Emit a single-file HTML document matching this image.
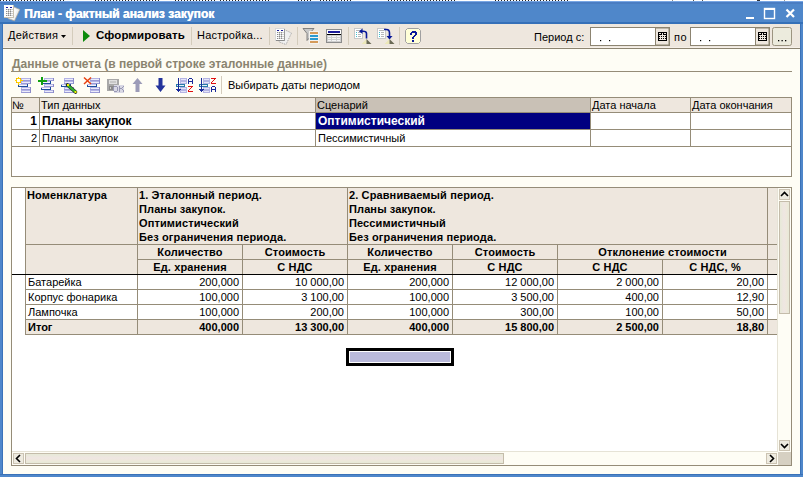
<!DOCTYPE html>
<html><head><meta charset="utf-8">
<style>
*{box-sizing:border-box;margin:0;padding:0}
html,body{width:803px;height:477px;overflow:hidden;background:#fefdf5;font-family:"Liberation Sans",sans-serif;font-size:11px;color:#000}
.a{position:absolute}
.t{position:absolute;white-space:nowrap;line-height:13px}
.b{font-weight:bold}
.rb{font-weight:bold;letter-spacing:0.12px}
#title{left:0;top:1px;width:803px;height:23px;background:linear-gradient(#78a6e4 0 1px,#4a7dc2 1px 3px,#4f87ca 3px 21px,#3570b8 21px)}
#topstrip{left:0;top:0;width:803px;height:1px;background:#fff}
#lb{left:0;top:24px;width:3px;height:453px;background:linear-gradient(90deg,#4f87ca 0 2px,#3a72b8 2px)}
#rb{left:800px;top:24px;width:3px;height:453px;background:linear-gradient(90deg,#3a72b8 0 1px,#4f87ca 1px)}
#bb{left:0;top:474px;width:803px;height:3px;background:linear-gradient(#3a72b8 0 1px,#4f87ca 1px)}
#tb{left:3px;top:24px;width:797px;height:25px;background:linear-gradient(#eee7de 0 23px,#f6f0e8 23px 24px,#8c8471 24px)}
.sep{position:absolute;width:1px;height:18px;background:#d4ccbc}
.grid{position:absolute;background:#fff;border:1px solid #958c78}
.hl{position:absolute;height:1px;background:#958c78}
.vl{position:absolute;width:1px;background:#958c78}
.hdr{position:absolute;background:#eee7de}
</style></head><body>
<div class="a" id="topstrip"></div>
<div class="a" style="left:672px;top:0;width:1px;height:1px;background:#888"></div><div class="a" style="left:693px;top:0;width:1px;height:1px;background:#555"></div><div class="a" style="left:702px;top:0;width:1px;height:1px;background:#555"></div><div class="a" style="left:757px;top:0;width:3px;height:1px;background:#333"></div><div class="a" style="left:784px;top:0;width:1px;height:1px;background:#999"></div>
<div class="a" style="left:0px;top:0;width:65px;height:1px;background:repeating-linear-gradient(90deg,#222 0 1px,transparent 1px 3px)"></div><div class="a" style="left:95px;top:0;width:65px;height:1px;background:repeating-linear-gradient(90deg,#222 0 1px,transparent 1px 3px)"></div><div class="a" style="left:175px;top:0;width:40px;height:1px;background:repeating-linear-gradient(90deg,#222 0 1px,transparent 1px 3px)"></div><div class="a" style="left:220px;top:0;width:49px;height:1px;background:repeating-linear-gradient(90deg,#222 0 1px,transparent 1px 3px)"></div><div class="a" style="left:298px;top:0;width:14px;height:1px;background:repeating-linear-gradient(90deg,#222 0 1px,transparent 1px 3px)"></div><div class="a" style="left:320px;top:0;width:32px;height:1px;background:repeating-linear-gradient(90deg,#222 0 1px,transparent 1px 3px)"></div><div class="a" style="left:388px;top:0;width:68px;height:1px;background:repeating-linear-gradient(90deg,#222 0 1px,transparent 1px 3px)"></div><div class="a" style="left:495px;top:0;width:73px;height:1px;background:repeating-linear-gradient(90deg,#222 0 1px,transparent 1px 3px)"></div>
<div class="a" id="title"></div>
<div class="a" id="lb"></div><div class="a" id="rb"></div><div class="a" id="bb"></div>
<div class="a" id="tb"></div>

<!-- title text -->
<div class="t b" style="left:24px;top:6px;font-size:12px;line-height:16px;color:#fff;letter-spacing:0.05px;text-shadow:0.4px 0 0 #fff">План - фактный анализ закупок</div>

<!-- toolbar -->
<div class="t" style="left:8px;top:29px;letter-spacing:0.25px">Действия</div>
<div class="sep" style="left:72px;top:27px"></div>
<div class="t b" style="left:96px;top:29px;font-size:11.5px;letter-spacing:0.1px">Сформировать</div>
<div class="sep" style="left:191px;top:27px"></div>
<div class="t" style="left:197px;top:29px;letter-spacing:0.2px">Настройка...</div>
<div class="sep" style="left:269px;top:27px"></div>
<div class="sep" style="left:297px;top:27px"></div>
<div class="sep" style="left:348px;top:27px"></div>
<div class="sep" style="left:399px;top:27px"></div>
<div class="t" style="left:534px;top:31px">Период с:</div>
<div class="t" style="left:674px;top:31px;letter-spacing:0.5px">по</div>

<!-- section caption -->
<div class="t b" style="left:12px;top:58px;font-size:12px;color:#8a8470">Данные отчета (в первой строке эталонные данные)</div>
<div class="a" style="left:11px;top:71px;width:781px;height:1px;background:#958c78"></div>
<div class="sep" style="left:221px;top:76px"></div>
<div class="t" style="left:228px;top:79px">Выбирать даты периодом</div>

<!-- grid 1 -->
<div class="grid" style="left:11px;top:97px;width:781px;height:80px"></div>
<div class="hdr" style="left:12px;top:98px;width:779px;height:14px"></div>
<div class="a" style="left:316px;top:98px;width:274px;height:14px;background:#c9c1b6"></div>
<div class="a" style="left:316px;top:113px;width:274px;height:16px;background:#000080"></div>
<div class="hl" style="left:12px;top:112px;width:779px"></div>
<div class="hl" style="left:12px;top:129px;width:779px"></div>
<div class="hl" style="left:12px;top:146px;width:779px"></div>
<div class="vl" style="left:39px;top:98px;height:48px"></div>
<div class="vl" style="left:315px;top:98px;height:48px"></div>
<div class="vl" style="left:590px;top:98px;height:48px"></div>
<div class="vl" style="left:690px;top:98px;height:48px"></div>
<div class="t" style="left:12px;top:99px">№</div>
<div class="t" style="left:41px;top:99px">Тип данных</div>
<div class="t" style="left:317px;top:99px">Сценарий</div>
<div class="t" style="left:592px;top:99px">Дата начала</div>
<div class="t" style="left:692px;top:99px">Дата окончания</div>
<div class="t b" style="left:12px;top:115px;width:25px;text-align:right;font-size:12px">1</div>
<div class="t b" style="left:42px;top:115px;font-size:12px">Планы закупок</div>
<div class="t b" style="left:318px;top:115px;font-size:12px;color:#fff">Оптимистический</div>
<div class="t" style="left:12px;top:132px;width:25px;text-align:right">2</div>
<div class="t" style="left:42px;top:132px">Планы закупок</div>
<div class="t" style="left:318px;top:132px">Пессимистичный</div>

<!-- report frame -->
<div class="grid" style="left:11px;top:187px;width:781px;height:279px"></div>

<!-- REPORT -->
<div class="a" style="left:26px;top:188px;width:751px;height:86px;background:#eee7de"></div>
<div class="a" style="left:26px;top:320px;width:751px;height:14px;background:#eee7de"></div>
<div class="a" style="left:25px;top:244px;width:752px;height:1px;background:#958c78"></div>
<div class="a" style="left:137px;top:259px;width:640px;height:1px;background:#958c78"></div>
<div class="a" style="left:25px;top:188px;width:1px;height:146px;background:#958c78"></div>
<div class="a" style="left:137px;top:188px;width:1px;height:86px;background:#958c78"></div>
<div class="a" style="left:347px;top:188px;width:1px;height:86px;background:#958c78"></div>
<div class="a" style="left:767px;top:188px;width:1px;height:86px;background:#958c78"></div>
<div class="a" style="left:557px;top:244px;width:1px;height:30px;background:#958c78"></div>
<div class="a" style="left:242px;top:244px;width:1px;height:90px;background:#958c78"></div>
<div class="a" style="left:452px;top:244px;width:1px;height:90px;background:#958c78"></div>
<div class="a" style="left:662px;top:259px;width:1px;height:75px;background:#958c78"></div>
<div class="a" style="left:137px;top:274px;width:1px;height:60px;background:#958c78"></div>
<div class="a" style="left:347px;top:274px;width:1px;height:60px;background:#958c78"></div>
<div class="a" style="left:557px;top:274px;width:1px;height:60px;background:#958c78"></div>
<div class="a" style="left:767px;top:274px;width:1px;height:60px;background:#958c78"></div>
<div class="a" style="left:12px;top:274px;width:765px;height:1px;background:#000"></div>
<div class="a" style="left:25px;top:289px;width:752px;height:1px;background:#958c78"></div>
<div class="t" style="left:28px;top:276px;">Батарейка</div>
<div class="t" style="left:138px;top:276px;width:101px;text-align:right;">200,000</div>
<div class="t" style="left:243px;top:276px;width:101px;text-align:right;">10 000,00</div>
<div class="t" style="left:348px;top:276px;width:101px;text-align:right;">200,000</div>
<div class="t" style="left:453px;top:276px;width:101px;text-align:right;">12 000,00</div>
<div class="t" style="left:558px;top:276px;width:101px;text-align:right;">2 000,00</div>
<div class="t" style="left:663px;top:276px;width:101px;text-align:right;">20,00</div>
<div class="a" style="left:25px;top:304px;width:752px;height:1px;background:#958c78"></div>
<div class="t" style="left:28px;top:291px;">Корпус фонарика</div>
<div class="t" style="left:138px;top:291px;width:101px;text-align:right;">100,000</div>
<div class="t" style="left:243px;top:291px;width:101px;text-align:right;">3 100,00</div>
<div class="t" style="left:348px;top:291px;width:101px;text-align:right;">100,000</div>
<div class="t" style="left:453px;top:291px;width:101px;text-align:right;">3 500,00</div>
<div class="t" style="left:558px;top:291px;width:101px;text-align:right;">400,00</div>
<div class="t" style="left:663px;top:291px;width:101px;text-align:right;">12,90</div>
<div class="a" style="left:25px;top:319px;width:752px;height:1px;background:#958c78"></div>
<div class="t" style="left:28px;top:306px;">Лампочка</div>
<div class="t" style="left:138px;top:306px;width:101px;text-align:right;">100,000</div>
<div class="t" style="left:243px;top:306px;width:101px;text-align:right;">200,00</div>
<div class="t" style="left:348px;top:306px;width:101px;text-align:right;">100,000</div>
<div class="t" style="left:453px;top:306px;width:101px;text-align:right;">300,00</div>
<div class="t" style="left:558px;top:306px;width:101px;text-align:right;">100,00</div>
<div class="t" style="left:663px;top:306px;width:101px;text-align:right;">50,00</div>
<div class="a" style="left:25px;top:334px;width:752px;height:1px;background:#958c78"></div>
<div class="t b" style="left:28px;top:321px;">Итог</div>
<div class="t b" style="left:138px;top:321px;width:101px;text-align:right;">400,000</div>
<div class="t b" style="left:243px;top:321px;width:101px;text-align:right;">13 300,00</div>
<div class="t b" style="left:348px;top:321px;width:101px;text-align:right;">400,000</div>
<div class="t b" style="left:453px;top:321px;width:101px;text-align:right;">15 800,00</div>
<div class="t b" style="left:558px;top:321px;width:101px;text-align:right;">2 500,00</div>
<div class="t b" style="left:663px;top:321px;width:101px;text-align:right;">18,80</div>
<div class="t rb" style="left:27px;top:189px;">Номенклатура</div>
<div class="t rb" style="left:139px;top:189px;">1. Эталонный период.</div>
<div class="t rb" style="left:139px;top:203px;">Планы закупок.</div>
<div class="t rb" style="left:139px;top:217px;">Оптимистический</div>
<div class="t rb" style="left:139px;top:231px;">Без ограничения периода.</div>
<div class="t rb" style="left:349px;top:189px;">2. Сравниваемый период.</div>
<div class="t rb" style="left:349px;top:203px;">Планы закупок.</div>
<div class="t rb" style="left:349px;top:217px;">Пессимистичный</div>
<div class="t rb" style="left:349px;top:231px;">Без ограничения периода.</div>
<div class="t rb" style="left:138px;top:246px;width:104px;text-align:center;">Количество</div>
<div class="t rb" style="left:138px;top:261px;width:104px;text-align:center;">Ед. хранения</div>
<div class="t rb" style="left:243px;top:246px;width:104px;text-align:center;">Стоимость</div>
<div class="t rb" style="left:243px;top:261px;width:104px;text-align:center;">С НДС</div>
<div class="t rb" style="left:348px;top:246px;width:104px;text-align:center;">Количество</div>
<div class="t rb" style="left:348px;top:261px;width:104px;text-align:center;">Ед. хранения</div>
<div class="t rb" style="left:453px;top:246px;width:104px;text-align:center;">Стоимость</div>
<div class="t rb" style="left:453px;top:261px;width:104px;text-align:center;">С НДС</div>
<div class="t rb" style="left:558px;top:246px;width:209px;text-align:center;">Отклонение стоимости</div>
<div class="t rb" style="left:558px;top:261px;width:104px;text-align:center;">С НДС</div>
<div class="t rb" style="left:663px;top:261px;width:104px;text-align:center;">С НДС, %</div>
<!-- /REPORT -->
<!-- ICONS -->
<svg class="a" style="left:0;top:0" width="803" height="477" viewBox="0 0 803 477">
<!-- title icon -->
<g>
<path d="M13 6.5 L19.8 9.5 L14.5 20.8 L8 18.5 Z" fill="#f0f0f0" stroke="#b0aaa0" stroke-width="0.8"/>
<path d="M14 8 L17 10 L13 19 L10 17.5 Z" fill="#fafafa"/>
<rect x="4" y="5" width="10" height="13" fill="#fdfdfd"/>
<rect x="4" y="17" width="10" height="1" fill="#c8c0b0"/><rect x="13" y="5" width="1" height="13" fill="#c8c0b0"/>
<rect x="6" y="7" width="2" height="1" fill="#1a1a9a"/><rect x="10" y="7" width="2" height="1" fill="#1a1a9a"/>
<g shape-rendering="crispEdges"><rect x="6" y="9" width="7" height="1" fill="#d0d0d0"/><rect x="6" y="9" width="1" height="1" fill="#8c8c8c"/><rect x="8" y="9" width="1" height="1" fill="#8c8c8c"/><rect x="10" y="9" width="1" height="1" fill="#8c8c8c"/><rect x="6" y="11" width="7" height="1" fill="#d0d0d0"/><rect x="6" y="11" width="1" height="1" fill="#8c8c8c"/><rect x="8" y="11" width="1" height="1" fill="#8c8c8c"/><rect x="10" y="11" width="1" height="1" fill="#8c8c8c"/><rect x="6" y="13" width="7" height="1" fill="#d0d0d0"/><rect x="6" y="13" width="1" height="1" fill="#8c8c8c"/><rect x="8" y="13" width="1" height="1" fill="#8c8c8c"/><rect x="10" y="13" width="1" height="1" fill="#8c8c8c"/><rect x="6" y="15" width="7" height="1" fill="#d0d0d0"/><rect x="6" y="15" width="1" height="1" fill="#8c8c8c"/><rect x="8" y="15" width="1" height="1" fill="#8c8c8c"/><rect x="10" y="15" width="1" height="1" fill="#8c8c8c"/><rect x="8" y="10" width="1" height="1" fill="#c0c0c0"/><rect x="8" y="12" width="1" height="1" fill="#c0c0c0"/><rect x="8" y="14" width="1" height="1" fill="#c0c0c0"/><rect x="10" y="10" width="1" height="1" fill="#c0c0c0"/><rect x="10" y="12" width="1" height="1" fill="#c0c0c0"/><rect x="10" y="14" width="1" height="1" fill="#c0c0c0"/></g>
</g>
<!-- window buttons -->
<rect x="746" y="17" width="8" height="2" fill="#fff"/>
<rect x="764.5" y="8.5" width="10" height="10" fill="none" stroke="#fff" stroke-width="1.4"/>
<rect x="764" y="8" width="11" height="2" fill="#fff"/>
<path d="M786.5 9.5 L794 17 M794 9.5 L786.5 17" stroke="#fff" stroke-width="2.2"/>
<!-- Действия arrow -->
<path d="M61 35 L66 35 L63.5 38 Z" fill="#000"/>
<!-- play -->
<path d="M83 30 L90 36 L83 42 Z" fill="#0b8a0b"/>
<!-- icon doc pages -->
<g>
<path d="M284 29.5 L291.5 33 L286 44.5 L279 42 Z" fill="#f0f0f0" stroke="#8a8a8a" stroke-width="0.8" stroke-dasharray="1 1"/>
<rect x="275" y="28" width="10" height="13" fill="#fdfdfd"/>
<rect x="275" y="40" width="10" height="1" fill="#8a8a8a"/><rect x="284" y="28" width="1" height="13" fill="#9a9a9a"/><rect x="275" y="28" width="10" height="1" fill="#d8d8d8"/><rect x="275" y="28" width="1" height="13" fill="#d8d8d8"/>
<rect x="277" y="30" width="2" height="1" fill="#1a1a9a"/><rect x="281" y="30" width="2" height="1" fill="#1a1a9a"/>
<g shape-rendering="crispEdges"><rect x="277" y="32" width="7" height="1" fill="#d4d4d4"/><rect x="277" y="32" width="1" height="1" fill="#8a8a8a"/><rect x="279" y="32" width="1" height="1" fill="#8a8a8a"/><rect x="281" y="32" width="1" height="1" fill="#8a8a8a"/><rect x="277" y="34" width="7" height="1" fill="#d4d4d4"/><rect x="277" y="34" width="1" height="1" fill="#8a8a8a"/><rect x="279" y="34" width="1" height="1" fill="#8a8a8a"/><rect x="281" y="34" width="1" height="1" fill="#8a8a8a"/><rect x="277" y="36" width="7" height="1" fill="#d4d4d4"/><rect x="277" y="36" width="1" height="1" fill="#8a8a8a"/><rect x="279" y="36" width="1" height="1" fill="#8a8a8a"/><rect x="281" y="36" width="1" height="1" fill="#8a8a8a"/><rect x="277" y="38" width="7" height="1" fill="#d4d4d4"/><rect x="277" y="38" width="1" height="1" fill="#8a8a8a"/><rect x="279" y="38" width="1" height="1" fill="#8a8a8a"/><rect x="281" y="38" width="1" height="1" fill="#8a8a8a"/><rect x="279" y="33" width="1" height="1" fill="#c4c4c4"/><rect x="279" y="35" width="1" height="1" fill="#c4c4c4"/><rect x="279" y="37" width="1" height="1" fill="#c4c4c4"/><rect x="281" y="33" width="1" height="1" fill="#c4c4c4"/><rect x="281" y="35" width="1" height="1" fill="#c4c4c4"/><rect x="281" y="37" width="1" height="1" fill="#c4c4c4"/></g>
</g>
<!-- filter -->
<g>
<path d="M303 28.5 L314 28.5 L309.5 33.5 L309.5 38 L307 40.5 L307 33.5 Z" fill="#c8c8c8" stroke="#6a6a6a" stroke-width="0.8"/>
<rect x="309" y="31" width="10" height="13" fill="#f4f2ee"/>
<rect x="310" y="32" width="8" height="2" fill="#d49a5a"/>
<rect x="310" y="35" width="8" height="2" fill="#2a9ad0"/>
<rect x="310" y="38" width="8" height="2" fill="#2a9ad0"/>
<rect x="310" y="41" width="8" height="2" fill="#d49a5a"/>
</g>
<!-- table -->
<g shape-rendering="crispEdges">
<rect x="326" y="29" width="16" height="14" fill="#8c8c8c"/>
<rect x="327" y="30" width="14" height="4" fill="#fff"/>
<rect x="328" y="31" width="12" height="2" fill="#1a1a9a"/>
<rect x="327" y="34" width="14" height="1" fill="#000"/>
<rect x="327" y="35" width="14" height="7" fill="#cfcfcf"/>
<g fill="#f4f4f4"><rect x="328" y="36" width="3" height="1"/><rect x="332" y="36" width="4" height="1"/><rect x="337" y="36" width="3" height="1"/><rect x="328" y="38" width="3" height="1"/><rect x="332" y="38" width="4" height="1"/><rect x="337" y="38" width="3" height="1"/><rect x="328" y="40" width="3" height="1"/><rect x="332" y="40" width="4" height="1"/><rect x="337" y="40" width="3" height="1"/></g>
</g>
<!-- move up/down icons -->
<g>
<rect x="354.5" y="28.5" width="8" height="10" fill="#fff" stroke="#c8c8c8" stroke-width="1"/>
<g fill="#40c0d0"><rect x="356" y="32" width="1" height="1"/><rect x="356" y="34" width="1" height="1"/><rect x="356" y="36" width="1" height="1"/></g>
<g fill="#b8b8b8"><rect x="356" y="30" width="5" height="1"/><rect x="358" y="32" width="3" height="1"/><rect x="358" y="34" width="3" height="1"/><rect x="358" y="36" width="3" height="1"/></g>
<path d="M366.5 38.5 L366.5 33.5 Q366.5 31.3 363 31.3 L361 31.3" fill="none" stroke="#0a1a9a" stroke-width="1.6"/>
<path d="M359 31.3 L362.5 28.5 L362.5 34 Z" fill="#0a1a9a"/>
<path d="M361.5 44 L366.5 39 L366.5 44 Z" fill="#ece8b8"/><path d="M366.5 39 L371.5 44 L366.5 44 Z" fill="#6a6a56"/>
<rect x="377.5" y="28.5" width="8" height="10" fill="#fff" stroke="#c8c8c8" stroke-width="1"/>
<g fill="#40c0d0"><rect x="379" y="32" width="1" height="1"/><rect x="379" y="34" width="1" height="1"/><rect x="379" y="36" width="1" height="1"/></g>
<g fill="#b8b8b8"><rect x="379" y="30" width="5" height="1"/><rect x="381" y="32" width="3" height="1"/><rect x="381" y="34" width="3" height="1"/><rect x="381" y="36" width="3" height="1"/></g>
<path d="M384 29.5 L386.5 29.5 Q389.5 29.5 389.5 33 L389.5 36" fill="none" stroke="#0a1a9a" stroke-width="1.6"/>
<path d="M386.5 36 L392.5 36 L389.5 39.5 Z" fill="#0a1a9a"/>
<path d="M384.5 44 L389.5 39 L389.5 44 Z" fill="#ece8b8"/><path d="M389.5 39 L394.5 44 L389.5 44 Z" fill="#6a6a56"/>
</g>
<!-- help -->
<g>
<path d="M407.5 28.5 L418.5 28.5 L420.5 30.5 L420.5 41.5 L418.5 43.5 L407.5 43.5 L405.5 41.5 L405.5 30.5 Z" fill="#ffffd8" stroke="#a0a0a0" stroke-width="1"/>
<g fill="#0a1a9a" shape-rendering="crispEdges"><rect x="412" y="31" width="1" height="1"/><rect x="413" y="31" width="1" height="1"/><rect x="414" y="31" width="1" height="1"/><rect x="415" y="31" width="1" height="1"/><rect x="411" y="32" width="1" height="1"/><rect x="412" y="32" width="1" height="1"/><rect x="413" y="32" width="1" height="1"/><rect x="414" y="32" width="1" height="1"/><rect x="415" y="32" width="1" height="1"/><rect x="416" y="32" width="1" height="1"/><rect x="410" y="33" width="1" height="1"/><rect x="411" y="33" width="1" height="1"/><rect x="415" y="33" width="1" height="1"/><rect x="416" y="33" width="1" height="1"/><rect x="410" y="34" width="1" height="1"/><rect x="411" y="34" width="1" height="1"/><rect x="415" y="34" width="1" height="1"/><rect x="416" y="34" width="1" height="1"/><rect x="414" y="35" width="1" height="1"/><rect x="415" y="35" width="1" height="1"/><rect x="413" y="36" width="1" height="1"/><rect x="414" y="36" width="1" height="1"/><rect x="412" y="37" width="1" height="1"/><rect x="413" y="37" width="1" height="1"/><rect x="412" y="38" width="1" height="1"/><rect x="413" y="38" width="1" height="1"/><rect x="412" y="40" width="1" height="1"/><rect x="413" y="40" width="1" height="1"/><rect x="412" y="41" width="1" height="1"/><rect x="413" y="41" width="1" height="1"/></g>
</g>
<!-- date boxes -->
<g>
<rect x="590.5" y="27.5" width="79" height="18" fill="#fff" stroke="#8c8471" stroke-width="1"/>
<rect x="655.5" y="28" width="13.5" height="17" fill="#eee7de" stroke="#8c8471" stroke-width="1"/>
<rect x="600" y="40" width="1.2" height="1.2" fill="#000"/><rect x="609" y="40" width="1.2" height="1.2" fill="#000"/>
<rect x="690.5" y="27.5" width="79" height="18" fill="#fff" stroke="#8c8471" stroke-width="1"/>
<rect x="755.5" y="28" width="13.5" height="17" fill="#eee7de" stroke="#8c8471" stroke-width="1"/>
<rect x="700" y="40" width="1.2" height="1.2" fill="#000"/><rect x="709" y="40" width="1.2" height="1.2" fill="#000"/>
<g id="cal1" fill="#000" shape-rendering="crispEdges"><rect x="658" y="32" width="1" height="1"/><rect x="659" y="32" width="1" height="1"/><rect x="660" y="32" width="1" height="1"/><rect x="661" y="32" width="1" height="1"/><rect x="662" y="32" width="1" height="1"/><rect x="663" y="32" width="1" height="1"/><rect x="664" y="32" width="1" height="1"/><rect x="665" y="32" width="1" height="1"/><rect x="666" y="32" width="1" height="1"/><rect x="658" y="33" width="1" height="1"/><rect x="661" y="33" width="1" height="1"/><rect x="663" y="33" width="1" height="1"/><rect x="666" y="33" width="1" height="1"/><rect x="658" y="34" width="1" height="1"/><rect x="659" y="34" width="1" height="1"/><rect x="660" y="34" width="1" height="1"/><rect x="661" y="34" width="1" height="1"/><rect x="663" y="34" width="1" height="1"/><rect x="664" y="34" width="1" height="1"/><rect x="665" y="34" width="1" height="1"/><rect x="666" y="34" width="1" height="1"/><rect x="658" y="35" width="1" height="1"/><rect x="666" y="35" width="1" height="1"/><rect x="658" y="36" width="1" height="1"/><rect x="659" y="36" width="1" height="1"/><rect x="661" y="36" width="1" height="1"/><rect x="663" y="36" width="1" height="1"/><rect x="665" y="36" width="1" height="1"/><rect x="666" y="36" width="1" height="1"/><rect x="658" y="37" width="1" height="1"/><rect x="666" y="37" width="1" height="1"/><rect x="658" y="38" width="1" height="1"/><rect x="659" y="38" width="1" height="1"/><rect x="661" y="38" width="1" height="1"/><rect x="663" y="38" width="1" height="1"/><rect x="665" y="38" width="1" height="1"/><rect x="666" y="38" width="1" height="1"/><rect x="658" y="39" width="1" height="1"/><rect x="666" y="39" width="1" height="1"/><rect x="658" y="40" width="1" height="1"/><rect x="659" y="40" width="1" height="1"/><rect x="660" y="40" width="1" height="1"/><rect x="661" y="40" width="1" height="1"/><rect x="662" y="40" width="1" height="1"/><rect x="663" y="40" width="1" height="1"/><rect x="664" y="40" width="1" height="1"/><rect x="665" y="40" width="1" height="1"/><rect x="666" y="40" width="1" height="1"/></g>
<use href="#cal1" x="100" y="0"/>
<rect x="772.5" y="27.5" width="19" height="18" rx="2" fill="#ecebdd" stroke="#9c9480" stroke-width="1"/>
<g fill="#000"><rect x="778" y="40" width="1.3" height="1.3"/><rect x="781.5" y="40" width="1.3" height="1.3"/><rect x="785" y="40" width="1.3" height="1.3"/></g>
</g>
</svg>

<!-- /ICONS -->
<!-- ICONS2 -->
<svg class="a" style="left:0;top:0" width="803" height="477" viewBox="0 0 803 477">
<defs>
<linearGradient id="thv" x1="0" y1="0" x2="1" y2="0"><stop offset="0" stop-color="#e6ead6"/><stop offset="0.45" stop-color="#efe6e2"/><stop offset="0.7" stop-color="#eee8dc"/><stop offset="1" stop-color="#e6ead6"/></linearGradient>
<linearGradient id="thh" x1="0" y1="0" x2="0" y2="1"><stop offset="0" stop-color="#e6ead6"/><stop offset="0.45" stop-color="#efe6e2"/><stop offset="0.7" stop-color="#eee8dc"/><stop offset="1" stop-color="#e6ead6"/></linearGradient>
<g id="bar" shape-rendering="crispEdges"><rect x="0" y="0" width="10" height="3" fill="#b4b4e6"/><rect x="0" y="2" width="10" height="1" fill="#9a9ad6"/><rect x="9" y="0" width="1" height="3" fill="#8c8cc8"/><rect x="1" y="1" width="8" height="1" fill="#ececfa"/></g>
<g id="dbar" shape-rendering="crispEdges"><rect x="0" y="0" width="10" height="3" fill="#1e4e9c"/><rect x="0" y="0" width="9" height="1" fill="#c0c0ea"/><rect x="1" y="1" width="8" height="1" fill="#f4f4fc"/></g>
</defs>
<!-- icon1: new row -->
<use href="#bar" x="21" y="78"/><use href="#bar" x="21" y="81"/><use href="#dbar" x="18" y="84"/><use href="#bar" x="21" y="87"/><use href="#bar" x="21" y="90"/>
<g shape-rendering="crispEdges" fill="#ffd000"><rect x="18" y="77" width="1" height="8"/><rect x="15" y="80" width="8" height="1"/><rect x="16" y="78" width="5" height="5"/></g><rect x="17" y="79" width="3" height="3" fill="#fff" shape-rendering="crispEdges"/><g fill="#f0a800" shape-rendering="crispEdges"><rect x="16" y="78" width="1" height="1"/><rect x="20" y="78" width="1" height="1"/><rect x="16" y="82" width="1" height="1"/><rect x="20" y="82" width="1" height="1"/></g>
<!-- icon2: add -->
<use href="#bar" x="44" y="78"/><use href="#dbar" x="41" y="81"/><use href="#bar" x="44" y="84"/><use href="#dbar" x="41" y="87"/><use href="#bar" x="44" y="90"/>
<rect x="38" y="80" width="9" height="2" fill="#10a010" shape-rendering="crispEdges"/><rect x="41" y="77" width="2" height="8" fill="#10a010" shape-rendering="crispEdges"/>
<!-- icon3: edit -->
<use href="#bar" x="64" y="78"/><use href="#bar" x="64" y="81"/><use href="#dbar" x="61" y="84"/><use href="#bar" x="64" y="87"/><use href="#bar" x="64" y="90"/>
<path d="M67.5 85 L75.5 92" stroke="#203020" stroke-width="3.6" stroke-linecap="round"/><path d="M67.8 85.3 L75.2 91.7" stroke="#30b030" stroke-width="2.2"/><rect x="67" y="84" width="2" height="2" fill="#f0f000"/><rect x="74.5" y="91" width="2" height="2" fill="#f0f000"/>
<!-- icon4: delete -->
<use href="#bar" x="90" y="78"/><use href="#bar" x="90" y="81"/><use href="#dbar" x="87" y="84"/><use href="#bar" x="90" y="87"/><use href="#bar" x="90" y="90"/>
<path d="M84 77.5 L91 84 M91 77.5 L84 84" stroke="#e84010" stroke-width="1.5"/>
<!-- icon5: disk ok (disabled) -->
<g shape-rendering="crispEdges">
<rect x="107" y="79" width="12" height="12" fill="#a8a8a8"/>
<rect x="109" y="80" width="8" height="4" fill="#e0e0e0"/><rect x="110" y="81" width="6" height="2" fill="#c8c8c8"/>
<rect x="109" y="86" width="5" height="4" fill="#8a8a8a"/><rect x="110" y="87" width="1" height="2" fill="#d0d0d0"/>
<rect x="114" y="85" width="10" height="8" fill="#d8d8e4"/>
<g fill="#9898b4"><rect x="114" y="86" width="1" height="1"/><rect x="115" y="86" width="1" height="1"/><rect x="116" y="86" width="1" height="1"/><rect x="113" y="87" width="1" height="1"/><rect x="117" y="87" width="1" height="1"/><rect x="113" y="88" width="1" height="1"/><rect x="117" y="88" width="1" height="1"/><rect x="113" y="89" width="1" height="1"/><rect x="117" y="89" width="1" height="1"/><rect x="113" y="90" width="1" height="1"/><rect x="117" y="90" width="1" height="1"/><rect x="114" y="91" width="1" height="1"/><rect x="115" y="91" width="1" height="1"/><rect x="116" y="91" width="1" height="1"/></g><g fill="#9898b4"><rect x="119" y="86" width="1" height="1"/><rect x="123" y="86" width="1" height="1"/><rect x="119" y="87" width="1" height="1"/><rect x="122" y="87" width="1" height="1"/><rect x="119" y="88" width="1" height="1"/><rect x="120" y="88" width="1" height="1"/><rect x="121" y="88" width="1" height="1"/><rect x="119" y="89" width="1" height="1"/><rect x="122" y="89" width="1" height="1"/><rect x="119" y="90" width="1" height="1"/><rect x="123" y="90" width="1" height="1"/><rect x="119" y="91" width="1" height="1"/><rect x="123" y="91" width="1" height="1"/></g></g>
<!-- up arrow disabled -->
<path d="M137.5 78 L142.5 84 L139.5 84 L139.5 92 L135.5 92 L135.5 84 L132.5 84 Z" fill="#9c9cb8"/>
<!-- down arrow -->
<path d="M158.5 78 L162.5 78 L162.5 85.5 L165.5 85.5 L160.5 92 L155.5 85.5 L158.5 85.5 Z" fill="#24349c"/>
<!-- sort az --><g transform="translate(0,0)" shape-rendering="crispEdges"><rect x="180" y="78" width="7" height="3" fill="#b4b4e4"/><rect x="181" y="79" width="5" height="1" fill="#e4e4f8"/><rect x="180" y="81" width="7" height="3" fill="#b4b4e4"/><rect x="181" y="82" width="5" height="1" fill="#e4e4f8"/><rect x="180" y="87" width="7" height="3" fill="#b4b4e4"/><rect x="181" y="88" width="5" height="1" fill="#e4e4f8"/><rect x="180" y="90" width="7" height="3" fill="#b4b4e4"/><rect x="181" y="91" width="5" height="1" fill="#e4e4f8"/><rect x="176" y="84" width="9" height="3" fill="#2a7aa8"/><rect x="177" y="85" width="7" height="1" fill="#e8f0f8"/><rect x="178" y="78" width="1" height="13" fill="#1a2a9a"/><rect x="176" y="89" width="5" height="1" fill="#1a2a9a"/><rect x="177" y="90" width="3" height="1" fill="#1a2a9a"/><rect x="178" y="91" width="1" height="1" fill="#1a2a9a"/><g fill="#1a2a9a"><rect x="189" y="78" width="1" height="1"/><rect x="190" y="78" width="1" height="1"/><rect x="191" y="78" width="1" height="1"/><rect x="188" y="79" width="1" height="1"/><rect x="192" y="79" width="1" height="1"/><rect x="188" y="80" width="1" height="1"/><rect x="192" y="80" width="1" height="1"/><rect x="188" y="81" width="1" height="1"/><rect x="189" y="81" width="1" height="1"/><rect x="190" y="81" width="1" height="1"/><rect x="191" y="81" width="1" height="1"/><rect x="192" y="81" width="1" height="1"/><rect x="188" y="82" width="1" height="1"/><rect x="192" y="82" width="1" height="1"/><rect x="188" y="83" width="1" height="1"/><rect x="192" y="83" width="1" height="1"/></g><g fill="#e01010"><rect x="188" y="86" width="1" height="1"/><rect x="189" y="86" width="1" height="1"/><rect x="190" y="86" width="1" height="1"/><rect x="191" y="86" width="1" height="1"/><rect x="192" y="86" width="1" height="1"/><rect x="191" y="87" width="1" height="1"/><rect x="190" y="88" width="1" height="1"/><rect x="189" y="89" width="1" height="1"/><rect x="188" y="90" width="1" height="1"/><rect x="188" y="91" width="1" height="1"/><rect x="189" y="91" width="1" height="1"/><rect x="190" y="91" width="1" height="1"/><rect x="191" y="91" width="1" height="1"/><rect x="192" y="91" width="1" height="1"/></g></g><g transform="translate(23,0)" shape-rendering="crispEdges"><rect x="180" y="78" width="7" height="3" fill="#b4b4e4"/><rect x="181" y="79" width="5" height="1" fill="#e4e4f8"/><rect x="180" y="81" width="7" height="3" fill="#b4b4e4"/><rect x="181" y="82" width="5" height="1" fill="#e4e4f8"/><rect x="180" y="87" width="7" height="3" fill="#b4b4e4"/><rect x="181" y="88" width="5" height="1" fill="#e4e4f8"/><rect x="180" y="90" width="7" height="3" fill="#b4b4e4"/><rect x="181" y="91" width="5" height="1" fill="#e4e4f8"/><rect x="176" y="84" width="9" height="3" fill="#2a7aa8"/><rect x="177" y="85" width="7" height="1" fill="#e8f0f8"/><rect x="178" y="78" width="1" height="13" fill="#1a2a9a"/><rect x="176" y="89" width="5" height="1" fill="#1a2a9a"/><rect x="177" y="90" width="3" height="1" fill="#1a2a9a"/><rect x="178" y="91" width="1" height="1" fill="#1a2a9a"/><g fill="#e01010"><rect x="188" y="78" width="1" height="1"/><rect x="189" y="78" width="1" height="1"/><rect x="190" y="78" width="1" height="1"/><rect x="191" y="78" width="1" height="1"/><rect x="192" y="78" width="1" height="1"/><rect x="191" y="79" width="1" height="1"/><rect x="190" y="80" width="1" height="1"/><rect x="189" y="81" width="1" height="1"/><rect x="188" y="82" width="1" height="1"/><rect x="188" y="83" width="1" height="1"/><rect x="189" y="83" width="1" height="1"/><rect x="190" y="83" width="1" height="1"/><rect x="191" y="83" width="1" height="1"/><rect x="192" y="83" width="1" height="1"/></g><g fill="#1a2a9a"><rect x="189" y="86" width="1" height="1"/><rect x="190" y="86" width="1" height="1"/><rect x="191" y="86" width="1" height="1"/><rect x="188" y="87" width="1" height="1"/><rect x="192" y="87" width="1" height="1"/><rect x="188" y="88" width="1" height="1"/><rect x="192" y="88" width="1" height="1"/><rect x="188" y="89" width="1" height="1"/><rect x="189" y="89" width="1" height="1"/><rect x="190" y="89" width="1" height="1"/><rect x="191" y="89" width="1" height="1"/><rect x="192" y="89" width="1" height="1"/><rect x="188" y="90" width="1" height="1"/><rect x="192" y="90" width="1" height="1"/><rect x="188" y="91" width="1" height="1"/><rect x="192" y="91" width="1" height="1"/></g></g>
<!-- lavender box -->
<rect x="347.5" y="349.5" width="105" height="15" fill="#fff" stroke="#000" stroke-width="3"/>
<rect x="350" y="352" width="100" height="10" fill="#babadb"/>
<!-- vertical scrollbar -->
<rect x="777" y="188" width="14" height="264" fill="#fefdf5"/>
<rect x="777" y="188" width="1" height="264" fill="#e6e3d6"/>
<rect x="779.5" y="189.5" width="10" height="10" fill="#eeebe0" stroke="#cbc3b2" stroke-width="1"/>
<path d="M781 196 L784.5 192.5 L788 196" fill="none" stroke="#000" stroke-width="1.6"/>
<rect x="779.5" y="201.5" width="10" height="112" fill="url(#thv)" stroke="#c4bcaa" stroke-width="1"/>
<rect x="779.5" y="440.5" width="10" height="10" fill="#eeebe0" stroke="#cbc3b2" stroke-width="1"/>
<path d="M781 444 L784.5 447.5 L788 444" fill="none" stroke="#000" stroke-width="1.6"/>
<!-- horizontal scrollbar -->
<rect x="12" y="451" width="766" height="14" fill="#fefdf5"/>
<rect x="12" y="451" width="766" height="1" fill="#e6e3d6"/>
<rect x="13.5" y="453.5" width="10" height="10" fill="#eeebe0" stroke="#cbc3b2" stroke-width="1"/>
<path d="M20 455 L16.5 458.5 L20 462" fill="none" stroke="#000" stroke-width="1.6"/>
<rect x="25.5" y="453.5" width="478" height="10" fill="url(#thh)" stroke="#c4bcaa" stroke-width="1"/>
<rect x="766.5" y="453.5" width="10" height="10" fill="#eeebe0" stroke="#cbc3b2" stroke-width="1"/>
<path d="M770 455 L773.5 458.5 L770 462" fill="none" stroke="#000" stroke-width="1.6"/>
<rect x="778" y="452" width="13" height="13" fill="#d6d0c2"/>
</svg>

<!-- /ICONS2 -->
</body></html>
